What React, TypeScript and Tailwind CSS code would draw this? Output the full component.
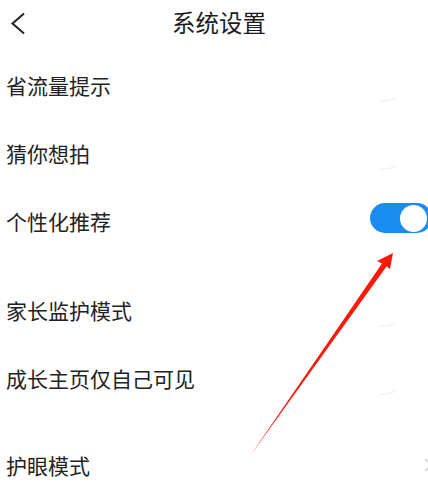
import React from 'react';

const font = { fontFamily: '"Noto Sans CJK SC", "Noto Sans", sans-serif' };

function Faint() {
  return (
    <svg width="20" height="6" viewBox="0 0 20 6" className="absolute right-[30px] bottom-[16px]">
      <path d="M1 4 Q10 5 18 1" stroke="#f3f3f3" strokeWidth="1.5" fill="none" />
    </svg>
  );
}

function Row({ label, faint, children, className = '' }: { label: string; faint?: boolean; children?: React.ReactNode; className?: string }) {
  return (
    <div className={`relative flex h-[68px] items-center justify-between pl-[6px] ${className}`}>
      <span className="text-[21px] leading-none text-[#222]">{label}</span>
      {children}
      {faint && <Faint />}
    </div>
  );
}

export default function App() {
  return (
    <div className="relative h-[500px] w-[428px] overflow-hidden bg-white" style={font}>
      <div className="relative flex h-[51px] items-start justify-center pt-[7px]">
        <svg width="16" height="24" viewBox="0 0 16 24" className="absolute left-[10px] top-[12px]">
          <polyline points="14,1.5 2.5,11.5 14,21.5" stroke="#222" strokeWidth="2" fill="none" strokeLinejoin="miter" />
        </svg>
        <h1 className="pl-[10px] text-[23.5px] font-normal leading-[30px] text-[#1c1c1c]">系统设置</h1>
      </div>

      <Row label="省流量提示" faint />
      <Row label="猜你想拍" faint />
      <Row label="个性化推荐" className="h-[66px]">
        <div className="-mr-[4px] mb-[6px] flex h-[30px] w-[62px] items-center justify-end rounded-full bg-[#1a8cf0] pr-[5px]">
          <div className="h-[27px] w-[27px] rounded-full bg-white" />
        </div>
      </Row>
      <div className="h-[21px]" />
      <Row label="家长监护模式" faint />
      <Row label="成长主页仅自己可见" faint />
      <div className="h-[19px]" />
      <Row label="护眼模式">
        <svg width="8" height="14" viewBox="0 0 8 14" className="-mr-[4px]">
          <polyline points="1,1 7,7 1,13" stroke="#cfcfcf" strokeWidth="1.5" fill="none" />
        </svg>
      </Row>

      <svg width="428" height="500" viewBox="0 0 428 500" className="pointer-events-none absolute left-0 top-0">
        <polygon points="393,253 390,269 386.5,266.5 250,456 382,263.5 377,261" fill="#fa1a0a" />
      </svg>
    </div>
  );
}
